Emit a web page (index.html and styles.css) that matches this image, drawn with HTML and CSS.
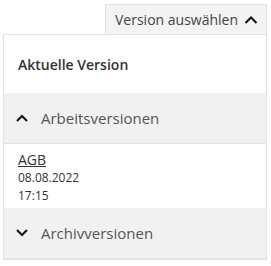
FILE: index.html
```html
<!DOCTYPE html>
<html lang="de">
<head>
<meta charset="utf-8">
<link rel="stylesheet" href="styles.css">
</head>
<body>
<div class="wrap">
  <div class="bar">
    <button class="toggle"><span>Version auswählen</span>
      <svg class="chev" width="14" height="10" viewBox="0 0 14 10"><path d="M1.5 8 L7 2.5 L12.5 8" fill="none" stroke="#111" stroke-width="2"/></svg>
    </button>
  </div>
  <div class="panel">
    <div class="current">Aktuelle Version</div>
    <div class="section">
      <svg class="schev" width="12" height="8" viewBox="0 0 12 8"><path d="M1 7 L6 2 L11 7" fill="none" stroke="#111" stroke-width="2"/></svg>
      <span>Arbeitsversionen</span>
    </div>
    <div class="items">
      <a class="link" href="#">AGB</a>
      <div class="meta">08.08.2022</div>
      <div class="meta">17:15</div>
    </div>
    <div class="section last">
      <svg class="schev" width="12" height="8" viewBox="0 0 12 8"><path d="M1 1 L6 6 L11 1" fill="none" stroke="#111" stroke-width="2"/></svg>
      <span>Archivversionen</span>
    </div>
  </div>
</div>
</body>
</html>
```
FILE: styles.css
```css
html, body { margin: 0; padding: 0; background: #fff; }
body { font-family: "Open Sans", "Noto Sans", sans-serif; color: #333; }
.wrap { width: 271px; padding-top: 4px; }
.bar { display: flex; justify-content: flex-end; padding-right: 4px; }
.toggle {
  display: flex; align-items: center; justify-content: space-between;
  height: 30px; width: 162px; box-sizing: border-box;
  padding: 0 8px 0 9px; white-space: nowrap;
  background: #f3f3f3; border: 1px solid #e2e2e2; border-bottom: none;
  font-family: inherit; font-size: 14px; color: #444;
}
.chev { display: block; }
.panel {
  margin-left: 3px; width: 264px; box-sizing: border-box;
  border: 1px solid #e3e3e3;
}
.current {
  height: 58px; display: flex; align-items: center;
  padding-left: 14px; font-size: 14px; font-weight: 600; color: #333;
}
.section {
  height: 50px; display: flex; align-items: center; gap: 13px;
  padding-left: 12px; background: #f1f1f1;
  border-bottom: 1px solid #e3e3e3; font-size: 15px; color: #555;
}
.schev { display: block; }
.items { padding: 6px 14px 3px; display: flex; flex-direction: column; }
.link { font-size: 14px; color: #333; text-decoration: underline; line-height: 19px; }
.meta { font-size: 12px; line-height: 18px; color: #333; }
.last { height: 50px; }
```
